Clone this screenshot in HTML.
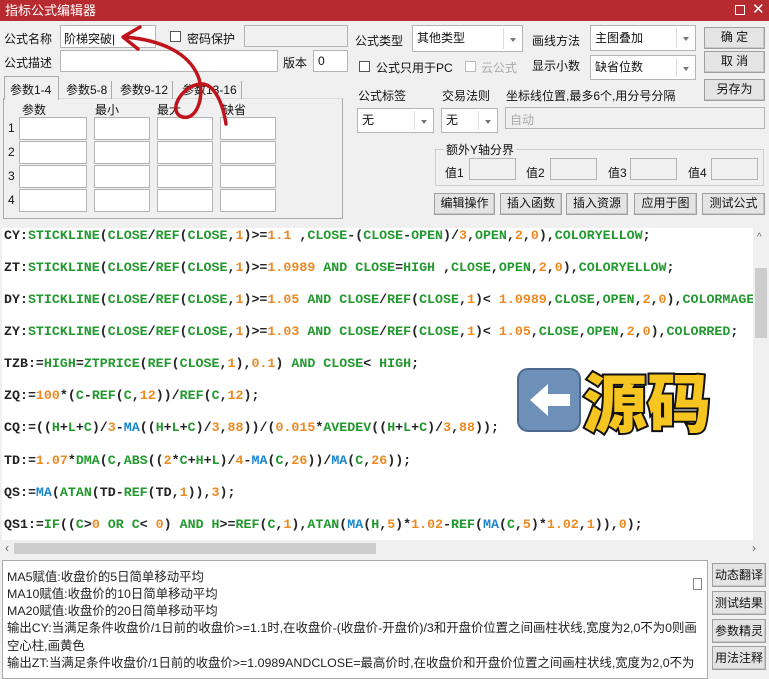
<!DOCTYPE html><html><head><meta charset="utf-8"><style>
*{box-sizing:border-box;margin:0;padding:0}
body{width:769px;height:679px;background:#f0f0f0;position:relative;overflow:hidden;font-family:"Liberation Sans","Noto Sans CJK SC",sans-serif;font-size:12px;color:#111}
.a{position:absolute}
.inp{position:absolute;background:#fff;border:1px solid #b4b4b4}
.btn{position:absolute;background:#e4e4e4;border:1px solid #a0a0a0;text-align:center;font-size:12px;line-height:19px;box-shadow:inset -1px -1px 0 #c8c8c8}
.cb{position:absolute;width:11px;height:11px;border:1px solid #555;background:#fff}
.combo{position:absolute;background:#fff;border:1px solid #b4b4b4;padding-left:4px;font-size:12px}
.combo:after{content:"";position:absolute;right:6px;top:50%;border:3px solid transparent;border-top:4px solid #777;margin-top:-1px}
.combo i{position:absolute;right:18px;top:2px;bottom:2px;border-left:1px solid #ddd}
#code{position:absolute;left:2px;top:228px;width:751px;height:312px;background:#fff;overflow:hidden;font-family:"Liberation Mono",monospace;font-weight:bold;font-size:13.3px;color:#222}
#code div{position:absolute;left:2px;white-space:pre}
.g{color:#22992e}.o{color:#ec8a22}.b{color:#1a86d0}
#low{position:absolute;left:2px;top:560px;width:706px;height:119px;background:#fff;border:1px solid #aaa}
#low div{position:absolute;left:4px;font-size:12.4px;white-space:nowrap;color:#222}
</style></head><body>
<div class="a" style="left:0;top:0;width:769px;height:21px;background:#b72b30;color:#fff;font-size:13px;line-height:21px;padding-left:5px">指标公式编辑器
<span class="a" style="left:735px;top:5px;width:10px;height:10px;border:1px solid #fff"></span>
<span class="a" style="left:752px;top:-1px;font-size:15px">✕</span></div>

<div class="a" style="left:4px;top:30px">公式名称</div>
<div class="inp" style="left:60px;top:25px;width:96px;height:23px;padding:4px 3px">阶梯突破|</div>
<div class="cb" style="left:170px;top:31px"></div><div class="a" style="left:187px;top:30px">密码保护</div>
<div class="inp" style="left:244px;top:25px;width:104px;height:22px;background:#f0f0f0"></div>
<div class="a" style="left:4px;top:54px">公式描述</div>
<div class="inp" style="left:60px;top:50px;width:218px;height:22px"></div>
<div class="a" style="left:283px;top:54px">版本</div>
<div class="inp" style="left:313px;top:50px;width:35px;height:22px;padding:3px 4px">0</div>

<div class="a" style="left:3px;top:98px;width:340px;height:121px;border:1px solid #aaa;border-top-color:#ddd"></div>
<div class="a" style="left:4px;top:76px;width:55px;height:24px;background:#f0f0f0;border:1px solid #aaa;border-bottom:none;padding:4px 5px">参数1-4</div>
<div class="a" style="left:62px;top:81px;border-right:1px solid #aaa;padding:0 4px;height:18px">参数5-8</div>
<div class="a" style="left:116px;top:81px;border-right:1px solid #aaa;padding:0 4px;height:18px">参数9-12</div>
<div class="a" style="left:178px;top:81px;border-right:1px solid #aaa;padding:0 4px;height:18px">参数13-16</div>
<div class="a" style="left:22px;top:101px">参数</div><div class="a" style="left:95px;top:101px">最小</div><div class="a" style="left:157px;top:101px">最大</div><div class="a" style="left:222px;top:101px">缺省</div>
<div class="a" style="left:8px;top:121px">1</div><div class="a" style="left:8px;top:145px">2</div><div class="a" style="left:8px;top:169px">3</div><div class="a" style="left:8px;top:193px">4</div>
<div class="inp" style="left:19px;top:117px;width:68px;height:23px"></div><div class="inp" style="left:94px;top:117px;width:56px;height:23px"></div><div class="inp" style="left:157px;top:117px;width:56px;height:23px"></div><div class="inp" style="left:220px;top:117px;width:56px;height:23px"></div>
<div class="inp" style="left:19px;top:141px;width:68px;height:23px"></div><div class="inp" style="left:94px;top:141px;width:56px;height:23px"></div><div class="inp" style="left:157px;top:141px;width:56px;height:23px"></div><div class="inp" style="left:220px;top:141px;width:56px;height:23px"></div>
<div class="inp" style="left:19px;top:165px;width:68px;height:23px"></div><div class="inp" style="left:94px;top:165px;width:56px;height:23px"></div><div class="inp" style="left:157px;top:165px;width:56px;height:23px"></div><div class="inp" style="left:220px;top:165px;width:56px;height:23px"></div>
<div class="inp" style="left:19px;top:189px;width:68px;height:23px"></div><div class="inp" style="left:94px;top:189px;width:56px;height:23px"></div><div class="inp" style="left:157px;top:189px;width:56px;height:23px"></div><div class="inp" style="left:220px;top:189px;width:56px;height:23px"></div>

<div class="a" style="left:355px;top:32px">公式类型</div>
<div class="combo" style="left:412px;top:25px;width:111px;height:27px;line-height:25px">其他类型<i></i></div>
<div class="a" style="left:532px;top:32px">画线方法</div>
<div class="combo" style="left:590px;top:25px;width:106px;height:26px;line-height:24px">主图叠加<i></i></div>
<div class="btn" style="left:704px;top:27px;width:61px;height:22px">确 定</div>
<div class="btn" style="left:704px;top:51px;width:61px;height:22px">取 消</div>
<div class="btn" style="left:704px;top:79px;width:61px;height:22px">另存为</div>
<div class="cb" style="left:359px;top:61px"></div><div class="a" style="left:376px;top:59px">公式只用于PC</div>
<div class="cb" style="left:465px;top:61px;border-color:#bbb"></div><div class="a" style="left:481px;top:59px;color:#aaa">云公式</div>
<div class="a" style="left:532px;top:57px">显示小数</div>
<div class="combo" style="left:590px;top:55px;width:106px;height:25px;line-height:23px">缺省位数<i></i></div>
<div class="a" style="left:358px;top:87px">公式标签</div><div class="a" style="left:442px;top:87px">交易法则</div><div class="a" style="left:506px;top:87px">坐标线位置,最多6个,用分号分隔</div>
<div class="combo" style="left:357px;top:108px;width:77px;height:25px;line-height:23px">无<i></i></div>
<div class="combo" style="left:441px;top:108px;width:57px;height:25px;line-height:23px">无<i></i></div>
<div class="inp" style="left:505px;top:107px;width:260px;height:22px;background:#f0f0f0;color:#aaa;padding:3px 4px">自动</div>
<div class="a" style="left:435px;top:149px;width:329px;height:37px;border:1px solid #ccc"></div>
<div class="a" style="left:444px;top:141px;background:#f0f0f0;padding:0 2px">额外Y轴分界</div>
<div class="a" style="left:445px;top:164px">值1</div><div class="inp" style="left:469px;top:158px;width:47px;height:22px;background:#f0f0f0"></div>
<div class="a" style="left:526px;top:164px">值2</div><div class="inp" style="left:550px;top:158px;width:47px;height:22px;background:#f0f0f0"></div>
<div class="a" style="left:608px;top:164px">值3</div><div class="inp" style="left:630px;top:158px;width:47px;height:22px;background:#f0f0f0"></div>
<div class="a" style="left:688px;top:164px">值4</div><div class="inp" style="left:711px;top:158px;width:47px;height:22px;background:#f0f0f0"></div>
<div class="btn" style="left:434px;top:193px;width:61px;height:22px">编辑操作</div>
<div class="btn" style="left:500px;top:193px;width:62px;height:22px">插入函数</div>
<div class="btn" style="left:566px;top:193px;width:62px;height:22px">插入资源</div>
<div class="btn" style="left:634px;top:193px;width:63px;height:22px">应用于图</div>
<div class="btn" style="left:702px;top:193px;width:63px;height:22px">测试公式</div>

<div id="code">
<div style="top:0">CY:<span class="g">STICKLINE</span>(<span class="g">CLOSE</span>/<span class="g">REF</span>(<span class="g">CLOSE</span>,<span class="o">1</span>)&gt;=<span class="o">1.1</span> ,<span class="g">CLOSE</span>-(<span class="g">CLOSE</span>-<span class="g">OPEN</span>)/<span class="o">3</span>,<span class="g">OPEN</span>,<span class="o">2</span>,<span class="o">0</span>),<span class="g">COLORYELLOW</span>;</div>
<div style="top:32px">ZT:<span class="g">STICKLINE</span>(<span class="g">CLOSE</span>/<span class="g">REF</span>(<span class="g">CLOSE</span>,<span class="o">1</span>)&gt;=<span class="o">1.0989</span> <span class="g">AND CLOSE</span>=<span class="g">HIGH</span> ,<span class="g">CLOSE</span>,<span class="g">OPEN</span>,<span class="o">2</span>,<span class="o">0</span>),<span class="g">COLORYELLOW</span>;</div>
<div style="top:64px">DY:<span class="g">STICKLINE</span>(<span class="g">CLOSE</span>/<span class="g">REF</span>(<span class="g">CLOSE</span>,<span class="o">1</span>)&gt;=<span class="o">1.05</span> <span class="g">AND CLOSE</span>/<span class="g">REF</span>(<span class="g">CLOSE</span>,<span class="o">1</span>)&lt; <span class="o">1.0989</span>,<span class="g">CLOSE</span>,<span class="g">OPEN</span>,<span class="o">2</span>,<span class="o">0</span>),<span class="g">COLORMAGENTA</span>;</div>
<div style="top:96px">ZY:<span class="g">STICKLINE</span>(<span class="g">CLOSE</span>/<span class="g">REF</span>(<span class="g">CLOSE</span>,<span class="o">1</span>)&gt;=<span class="o">1.03</span> <span class="g">AND CLOSE</span>/<span class="g">REF</span>(<span class="g">CLOSE</span>,<span class="o">1</span>)&lt; <span class="o">1.05</span>,<span class="g">CLOSE</span>,<span class="g">OPEN</span>,<span class="o">2</span>,<span class="o">0</span>),<span class="g">COLORRED</span>;</div>
<div style="top:128px">TZB:=<span class="g">HIGH</span>=<span class="g">ZTPRICE</span>(<span class="g">REF</span>(<span class="g">CLOSE</span>,<span class="o">1</span>),<span class="o">0.1</span>) <span class="g">AND CLOSE</span>&lt; <span class="g">HIGH</span>;</div>
<div style="top:160px">ZQ:=<span class="o">100</span>*(<span class="g">C</span>-<span class="g">REF</span>(<span class="g">C</span>,<span class="o">12</span>))/<span class="g">REF</span>(<span class="g">C</span>,<span class="o">12</span>);</div>
<div style="top:192px">CQ:=((<span class="g">H</span>+<span class="g">L</span>+<span class="g">C</span>)/<span class="o">3</span>-<span class="b">MA</span>((<span class="g">H</span>+<span class="g">L</span>+<span class="g">C</span>)/<span class="o">3</span>,<span class="o">88</span>))/(<span class="o">0.015</span>*<span class="g">AVEDEV</span>((<span class="g">H</span>+<span class="g">L</span>+<span class="g">C</span>)/<span class="o">3</span>,<span class="o">88</span>));</div>
<div style="top:225px">TD:=<span class="o">1.07</span>*<span class="g">DMA</span>(<span class="g">C</span>,<span class="g">ABS</span>((<span class="o">2</span>*<span class="g">C</span>+<span class="g">H</span>+<span class="g">L</span>)/<span class="o">4</span>-<span class="b">MA</span>(<span class="g">C</span>,<span class="o">26</span>))/<span class="b">MA</span>(<span class="g">C</span>,<span class="o">26</span>));</div>
<div style="top:257px">QS:=<span class="b">MA</span>(<span class="g">ATAN</span>(TD-<span class="g">REF</span>(TD,<span class="o">1</span>)),<span class="o">3</span>);</div>
<div style="top:289px">QS1:=<span class="g">IF</span>((<span class="g">C</span>&gt;<span class="o">0</span> <span class="g">OR C</span>&lt; <span class="o">0</span>) <span class="g">AND H</span>&gt;=<span class="g">REF</span>(<span class="g">C</span>,<span class="o">1</span>),<span class="g">ATAN</span>(<span class="b">MA</span>(<span class="g">H</span>,<span class="o">5</span>)*<span class="o">1.02</span>-<span class="g">REF</span>(<span class="b">MA</span>(<span class="g">C</span>,<span class="o">5</span>)*<span class="o">1.02</span>,<span class="o">1</span>)),<span class="o">0</span>);</div>
</div>
<div class="a" style="left:753px;top:228px;width:16px;height:312px;background:#f0f0f0"><div class="a" style="left:2px;top:40px;width:12px;height:70px;background:#cdcdcd"></div><div class="a" style="left:4px;top:4px;font-size:10px;color:#666">^</div></div>
<div class="a" style="left:2px;top:540px;width:767px;height:17px;background:#f0f0f0"><div class="a" style="left:12px;top:3px;width:362px;height:11px;background:#cdcdcd"></div><div class="a" style="left:3px;top:1px;color:#666">‹</div><div class="a" style="left:750px;top:1px;color:#666">›</div></div>

<div id="low">
<div style="top:6px">MA5赋值:收盘价的5日简单移动平均</div>
<div style="top:23px">MA10赋值:收盘价的10日简单移动平均</div>
<div style="top:40px">MA20赋值:收盘价的20日简单移动平均</div>
<div style="top:57px">输出CY:当满足条件收盘价/1日前的收盘价&gt;=1.1时,在收盘价-(收盘价-开盘价)/3和开盘价位置之间画柱状线,宽度为2,0不为0则画</div>
<div style="top:75px">空心柱,画黄色</div>
<div style="top:92px">输出ZT:当满足条件收盘价/1日前的收盘价&gt;=1.0989ANDCLOSE=最高价时,在收盘价和开盘价位置之间画柱状线,宽度为2,0不为</div>
<div class="a" style="left:690px;top:17px;width:9px;height:12px;border:1px solid #888"></div>
</div>
<div class="btn" style="left:712px;top:563px;width:54px;height:24px;line-height:22px">动态翻译</div>
<div class="btn" style="left:712px;top:591px;width:54px;height:24px;line-height:22px">测试结果</div>
<div class="btn" style="left:712px;top:619px;width:54px;height:24px;line-height:22px">参数精灵</div>
<div class="btn" style="left:712px;top:646px;width:54px;height:24px;line-height:22px">用法注释</div>

<svg class="a" style="left:0;top:0" width="769" height="679">
<path d="M226,124 C222,98 212,84 202,84 C184,84 168,108 180,116 C196,124 206,96 198,76 C188,52 160,40 125,37" fill="none" stroke="#c0141c" stroke-width="3.5" stroke-linecap="round"/>
<path d="M140,27 L123,37 L138,49" fill="none" stroke="#c0141c" stroke-width="3.5" stroke-linecap="round" stroke-linejoin="round"/>
<rect x="518" y="369" width="62" height="62" rx="10" fill="#6d8fb8" stroke="#4c6a90" stroke-width="2"/>
<path d="M530,400 L548,384 L548,394 L570,394 L570,406 L548,406 L548,416 Z" fill="#fff"/>
</svg>
<div class="a" style="left:583px;top:360px;font-size:64px;font-weight:900;color:#f7c520;-webkit-text-stroke:4px #111;paint-order:stroke fill;font-family:'Noto Sans CJK SC',sans-serif;line-height:80px">源码</div>
</body></html>
